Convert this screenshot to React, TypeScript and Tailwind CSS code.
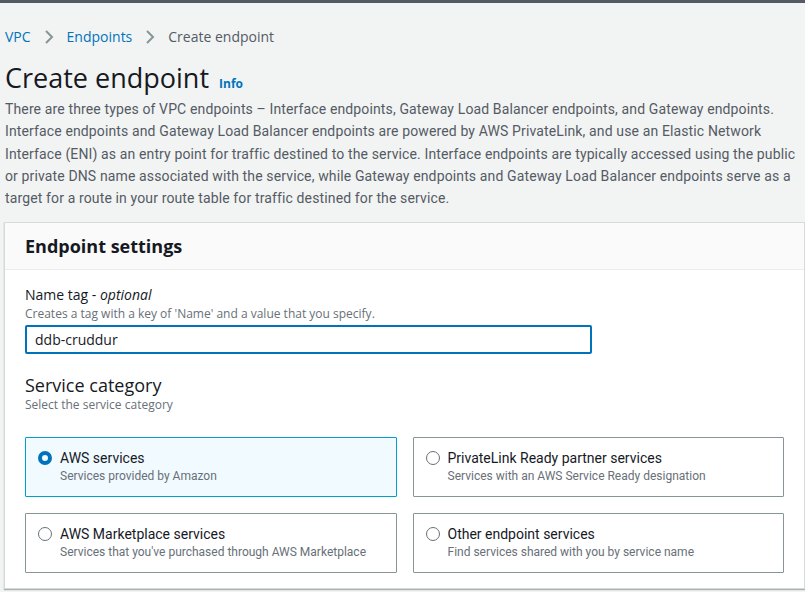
import React, { useState } from 'react';

const tiles = [
  { id: 'aws', title: 'AWS services', sub: 'Services provided by Amazon' },
  { id: 'partner', title: 'PrivateLink Ready partner services', sub: 'Services with an AWS Service Ready designation' },
  { id: 'market', title: 'AWS Marketplace services', sub: "Services that you've purchased through AWS Marketplace" },
  { id: 'other', title: 'Other endpoint services', sub: 'Find services shared with you by service name' },
];

const intro = [
  'There are three types of VPC endpoints – Interface endpoints, Gateway Load Balancer endpoints, and Gateway endpoints.',
  'Interface endpoints and Gateway Load Balancer endpoints are powered by AWS PrivateLink, and use an Elastic Network',
  'Interface (ENI) as an entry point for traffic destined to the service. Interface endpoints are typically accessed using the public',
  'or private DNS name associated with the service, while Gateway endpoints and Gateway Load Balancer endpoints serve as a',
  'target for a route in your route table for traffic destined for the service.',
];

const Chevron = () => (
  <svg width="12" height="16" viewBox="0 0 12 16" className="mx-3">
    <path d="M3 2l6 6-6 6" fill="none" stroke="#879596" strokeWidth="2" />
  </svg>
);

export default function App() {
  const [name, setName] = useState('ddb-cruddur');
  const [category, setCategory] = useState('aws');

  return (
    <div
      className="w-[805px] h-[592px] overflow-hidden bg-[#f2f3f3] border-t-[3px] border-[#545b64] text-[#16191f]"
      style={{ fontFamily: '"Open Sans", "Noto Sans", sans-serif' }}
    >
      {/* Breadcrumbs */}
      <div className="flex items-center pl-[5px] pt-[24px] text-[14px] leading-[20px]">
        <span className="text-[#0073bb]">VPC</span>
        <Chevron />
        <span className="text-[#0073bb]">Endpoints</span>
        <Chevron />
        <span className="text-[#545b64]">Create endpoint</span>
      </div>

      {/* Header */}
      <div className="flex items-baseline pl-[5px] pt-[14px]">
        <h1 className="text-[27px] leading-[34px] font-normal">Create endpoint</h1>
        <span className="ml-[10px] text-[12px] font-bold text-[#0073bb]">Info</span>
      </div>
      <p
        className="pl-[5px] pt-[3px] text-[14px] leading-[22.3px] text-[#545b64] tracking-[0.13px] whitespace-nowrap"
        style={{ fontFamily: 'Roboto, "Liberation Sans", sans-serif' }}
      >
        {intro.map((line, i) => (
          <span key={i} className="block">
            {line}
          </span>
        ))}
      </p>

      {/* Panel */}
      <div className="ml-[4px] mt-[13px] bg-white border border-[#d5dbdb] shadow-[0_1px_1px_rgba(0,28,36,0.3)]">
        <div className="h-[47px] flex items-center px-[20px] bg-[#fafafa] border-b border-[#eaeded]">
          <h2 className="text-[18px] font-bold leading-[22px]">Endpoint settings</h2>
        </div>
        <div className="px-[20px] pt-[15px] pb-[15px]">
          <label className="block text-[14px] leading-[20px]">
            Name tag - <i>optional</i>
          </label>
          <div className="text-[12px] leading-[16px] text-[#687078] mt-[1px]">
            Creates a tag with a key of 'Name' and a value that you specify.
          </div>
          <input
            value={name}
            onChange={(e) => setName(e.target.value)}
            className="mt-[3px] w-[567px] h-[29px] border-2 border-[#0073bb] rounded-[2px] px-[8px] text-[14px] outline-none text-[#16191f]"
          />

          <h3 className="mt-[19px] text-[18px] leading-[24px] font-normal">Service category</h3>
          <div className="text-[12px] leading-[16px] text-[#687078]">Select the service category</div>

          <div className="grid grid-cols-2 gap-[16px] mt-[24px]">
            {tiles.map((t) => {
              const on = category === t.id;
              return (
                <button
                  key={t.id}
                  onClick={() => setCategory(t.id)}
                  className={`h-[60px] flex items-start text-left pl-[12px] pt-[10px] border rounded-[1px] ${
                    on ? 'bg-[#f1faff] border-[#00a1c9]' : 'bg-white border-[#879596]'
                  }`}
                >
                  <span
                    className={`mt-[3px] w-[14px] h-[14px] rounded-full shrink-0 ${
                      on ? 'border-[4px] border-[#0073bb]' : 'border border-[#687078]'
                    }`}
                  />
                  <span className="ml-[8px] flex flex-col" style={{ fontFamily: 'Roboto, sans-serif' }}>
                    <span className="text-[14px] leading-[20px] text-[#16191f]">{t.title}</span>
                    <span className="text-[12px] leading-[17px] text-[#687078]">{t.sub}</span>
                  </span>
                </button>
              );
            })}
          </div>
        </div>
      </div>
    </div>
  );
}
